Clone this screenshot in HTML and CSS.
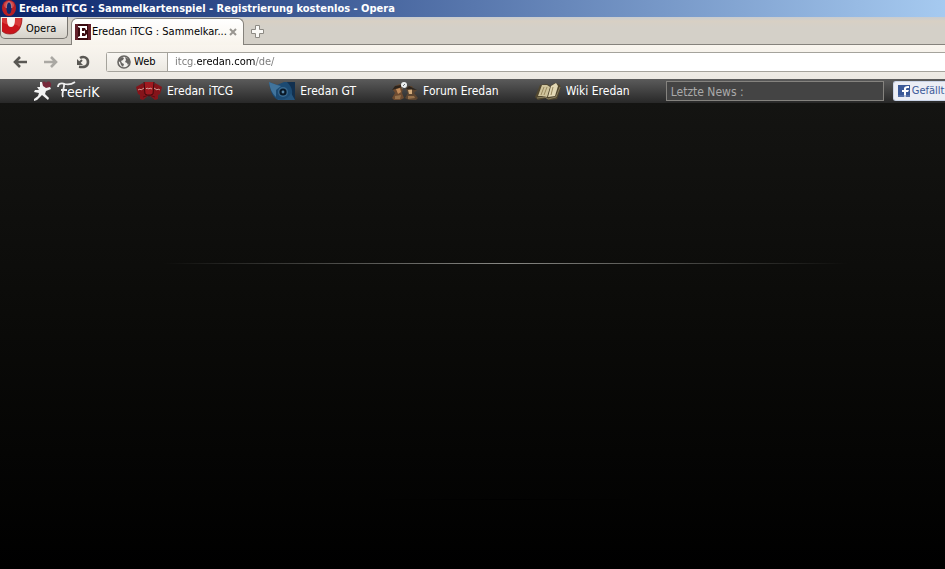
FILE: index.html
```html
<!DOCTYPE html>
<html lang="de">
<head>
<meta charset="utf-8">
<title>Eredan iTCG : Sammelkartenspiel</title>
<link rel="stylesheet" href="styles.css">
</head>
<body>
<header class="titlebar">
  <svg class="title-icon" width="17" height="17" viewBox="0 0 17 17" aria-hidden="true">
    <ellipse cx="8" cy="8" rx="7" ry="8" fill="#b81f25"/>
    <ellipse cx="8" cy="5" rx="5" ry="4" fill="#e06a68" opacity=".6"/>
    <ellipse cx="8" cy="8" rx="2.600" ry="6" fill="#122a6c"/>
    <path d="M5.400 8C5.400 0 10.600 0 10.600 8" fill="none" stroke="#e8a5a0" stroke-width=".6"/>
  </svg>
  <span>Eredan iTCG : Sammelkartenspiel - Registrierung kostenlos - Opera</span>
</header>

<div class="tabbar">
  <button class="menu-button" type="button">
    <svg width="22" height="17" viewBox="0 0 22 17" aria-hidden="true">
      <path d="M0 0H20C20 9 16 16 8 16C4 16 2 15 0 13Z" fill="#c9141b"/>
      <path d="M0 0H20C20 4 19 7 17 9C14 4 6 9 0 4Z" fill="#e2504c" opacity=".6"/>
      <path d="M5 0H13C13 6 12 9 9 9C6 9 5 6 5 0Z" fill="#f7f5f1"/>
      <path d="M20 0C20 9 16 16 8 16C4 16 2 15 0 13" fill="none" stroke="#8f1215" stroke-width=".7"/>
    </svg>
    <span>Opera</span>
  </button>
  <div class="tab">
    <svg width="16" height="16" viewBox="0 0 16 16" aria-hidden="true">
      <rect width="16" height="16" fill="#3a0b10"/>
      <path d="M0 0H3V16H0ZM13 0H16V16H13Z" fill="#63202a"/>
      <path d="M3 2H12V6H11L10 4H7V7H9L10 6V10L9 9H7V12H10L12 10V14H3V13L5 12V4L3 3Z" fill="#fff"/>
    </svg>
    <span class="tab-title">Eredan iTCG : Sammelkar...</span>
    <button class="tab-close" type="button" aria-label="Tab schließen">
      <svg width="8" height="8" viewBox="0 0 8 8"><path d="M1 1L7 7M7 1L1 7" stroke="#999691" stroke-width="2"/></svg>
    </button>
  </div>
  <button class="new-tab" type="button" aria-label="Neuer Tab">
    <svg width="13" height="13" viewBox="0 0 13 13"><path d="M4.500 .5H8.500V4.500H12.500V8.500H8.500V12.500H4.500V8.500H.5V4.500H4.500Z" fill="#faf9f6" stroke="#8d8a84"/></svg>
  </button>
</div>

<div class="toolbar">
  <button class="tool" type="button" aria-label="Zurück">
    <svg width="14" height="14" viewBox="0 0 14 14"><path d="M7 2L2 7L7 12M2 7H14" fill="none" stroke="#595753" stroke-width="2.600"/></svg>
  </button>
  <button class="tool" type="button" aria-label="Vorwärts">
    <svg width="14" height="14" viewBox="0 0 14 14"><path d="M7 2L12 7L7 12M12 7H0" fill="none" stroke="#aaa8a3" stroke-width="2.600"/></svg>
  </button>
  <button class="tool" type="button" aria-label="Neu laden">
    <svg width="16" height="14" viewBox="0 0 16 14"><path d="M5 3C8 1 13 2 13 7C13 12 9 12.500 4 11.800" fill="none" stroke="#5a5854" stroke-width="2.600"/><path d="M2 4V10H8Z" fill="#5a5854"/><path d="M3 9L7 5" stroke="#5a5854" stroke-width="2"/></svg>
  </button>
  <div class="address">
    <button class="badge" type="button">
      <svg width="14" height="14" viewBox="0 0 14 14" aria-hidden="true">
        <circle cx="7" cy="7" r="6" fill="#f3f1ed" stroke="#686663" stroke-width="1.600"/>
        <path d="M2 4L5 2L7 3L6 5L4 6L5 8L7 9L6 12L4 10L3 7L1 6ZM8 2L12 4L13 7L11 10L10 8L8 7L9 5Z" fill="#686663"/>
      </svg>
      <span>Web</span>
    </button>
    <input class="url" type="text" aria-label="Adresse" value="itcg.eredan.com/de/">
  </div>
</div>

<nav class="site-nav">
  <a class="brand" href="#" aria-label="FeeriK">
    <svg width="68" height="24" viewBox="0 0 68 24" aria-hidden="true">
      <path d="M10 8C9 3 12 1 14 4C16 1 20 3 19 7C18 9 16 10 13 11Z" fill="#78283a"/>
      <path d="M8 3L10 3L11 7L14 9L18 8L19 10L14 12L13 15L17 19L16 21L10 16L5 21L2 22L2 20L6 17L7 14L2 13L3 11L7 11L5 8L8 8Z" fill="#f2f2f2"/>
      <path d="M26 8C26 4 30 4 33 5C37 6 40 5 43 3M32 5C33 9 29 14 31 18M29 11H35" fill="none" stroke="#eee" stroke-width="1.800"/>
    </svg>
    <span class="brand-name">eeriK</span>
  </a>
  <a class="nav-link" href="#">
    <svg width="26" height="20" viewBox="0 0 26 20" aria-hidden="true">
      <path d="M0 6L7 2L13 14L7 19L4 18V14L2 13Z" fill="#85141a"/>
      <path d="M26 6L19 2L13 14L19 19L22 18V14L24 13Z" fill="#85141a"/>
      <path d="M8 1H18L17 13H9Z" fill="#a01a20"/>
      <path d="M8 1L9 13L13 15L17 13L18 1" fill="none" stroke="#40090d"/>
      <path d="M7 16L13 14L19 16" fill="none" stroke="#5c0d12"/>
      <path d="M10 8L11 7L13 8L14 7L16 8M2 9L4 8L5 9L8 7M18 7L21 9L22 8L24 9" fill="none" stroke="#d09c95"/>
    </svg>
    <span>Eredan iTCG</span>
  </a>
  <a class="nav-link" href="#">
    <svg width="26" height="20" viewBox="0 0 26 20" aria-hidden="true">
      <path d="M0 1L8 4L15 1H26V19H9C4 17 1 10 0 1Z" fill="#1c4a72"/>
      <path d="M0 1L8 4L12 5L7 9L7 16C3 12 1 8 0 1Z" fill="#41749c"/>
      <path d="M18 1H26V19H20C25 13 24 7 18 1Z" fill="#12304f"/>
      <path d="M9 18C14 20 20 17 22 12L26 19H9Z" fill="#24547d"/>
      <circle cx="14" cy="11" r="5" fill="#39698f"/>
      <circle cx="14" cy="11" r="3.600" fill="#091827"/>
      <circle cx="14" cy="11" r="1.400" fill="#5686a8"/>
    </svg>
    <span>Eredan GT</span>
  </a>
  <a class="nav-link" href="#">
    <svg width="26" height="20" viewBox="0 0 26 20" aria-hidden="true">
      <path d="M0 17L3 12L1 9L3 5L8 3L11 7L10 12L12 17L8 19H2Z" fill="#6d4b30"/>
      <path d="M26 17L22 12L25 9H22L20 5L16 5L14 8L16 12L13 17L17 19H24Z" fill="#5c4530"/>
      <path d="M4 8L8 7L9 11L6 13Z" fill="#c28c5b"/>
      <path d="M16 9L20 8L20 13L17 13Z" fill="#d3ac7c"/>
      <path d="M3 15L9 14L8 18L3 18ZM16 15L22 15L23 17L16 18Z" fill="#96714b"/>
      <path d="M0 9L3 5L9 4L10 6ZM14 8L17 5L25 9Z" fill="#2d241c"/>
      <circle cx="12" cy="4" r="3" fill="#eceff0"/>
      <path d="M11 5L13 3M11 6L10 8" stroke="#676d70"/>
    </svg>
    <span>Forum Eredan</span>
  </a>
  <a class="nav-link" href="#">
    <svg width="26" height="20" viewBox="0 0 26 20" aria-hidden="true">
      <path d="M0 16L5 4L12 3L15 5L20 2L25 4L26 7L22 18L14 19L11 17L3 19Z" fill="#51472f"/>
      <path d="M3 15L7 4L12 4L15 6L12 16L7 15Z" fill="#cfc49d"/>
      <path d="M13 16L16 5L21 2L23 5L20 15Z" fill="#e2d8b5"/>
      <path d="M6 14L9 6M9 14L12 6M16 14L18 6" stroke="#99895f"/>
      <path d="M2 17L10 16L13 18L21 16L25 6" fill="none" stroke="#8a8060"/>
    </svg>
    <span>Wiki Eredan</span>
  </a>
  <div class="news-group">
    <input class="news" type="text" aria-label="Letzte News" placeholder="Letzte News :">
    <button class="like" type="button">
      <svg width="12" height="12" viewBox="0 0 12 12" aria-hidden="true">
        <rect width="12" height="12" fill="#3b5998"/>
        <path d="M6 12V7H4V5H6V4C6 2 7 1 11 1V3H9C8 3 8 4 8 5H11L10 7H8V12Z" fill="#fff"/>
        <path d="M0 11H12" stroke="#7085b4"/>
      </svg>
      <span>Gefällt</span>
    </button>
  </div>
</nav>

<main class="page">
  <hr class="divider">
  <hr class="divider faint">
</main>
</body>
</html>
```
FILE: styles.css
```css
* {
  box-sizing: border-box;
}

body {
  margin: 0;
  min-height: 100vh;
  display: flex;
  flex-direction: column;
  overflow: hidden;
  background: #000;
  color: #000;
  font: 11px/16px "DejaVu Sans Condensed", "DejaVu Sans", sans-serif;
}

button,
input {
  margin: 0;
  padding: 0;
  border: 0;
  background: none;
  color: inherit;
  font: inherit;
}

svg {
  display: block;
  flex: none;
}

.titlebar {
  display: flex;
  align-items: center;
  gap: 1px;
  height: 17px;
  padding-left: 1px;
  background: linear-gradient(90deg, #0a246a, #a6caf0);
  color: #fff;
  font-weight: bold;
  white-space: nowrap;
}

.tabbar {
  display: flex;
  align-items: flex-start;
  height: 28px;
  background: linear-gradient(#c8ccd0, #d8d0c4 4px, #d4d0c8 10px);
  box-shadow: inset 0 -1px #85827c;
}

.menu-button {
  display: flex;
  align-items: flex-start;
  gap: 2px;
  width: 68px;
  height: 22px;
  margin-right: 3px;
  padding: 1px;
  border: 1px solid #77746f;
  border-top: 0;
  border-radius: 0 0 5px 5px;
  background: linear-gradient(#f4f2ee, #d6d2ca);
}

.menu-button span {
  padding-top: 3px;
}

.tab {
  display: flex;
  align-items: center;
  gap: 1px;
  width: 173px;
  height: 27px;
  margin-top: 1px;
  padding: 0 6px 0 3px;
  border: 1px solid #85827c;
  border-bottom: 0;
  border-radius: 6px 6px 0 0;
  background: linear-gradient(#fff, #f8f4ec);
}

.tab-title {
  flex: 1;
  white-space: nowrap;
}

.new-tab {
  padding: 8px 7px;
}

.toolbar {
  display: flex;
  align-items: center;
  height: 34px;
  padding-left: 13px;
  background: linear-gradient(#f9f5ee, #ece9e3);
}

.tool {
  width: 31px;
  height: 24px;
}

.address {
  display: flex;
  flex: 1;
  height: 20px;
  border: 1px solid #a5a39c;
  border-right: 0;
  border-radius: 3px 0 0 3px;
  background: #fff;
}

.badge {
  display: flex;
  align-items: center;
  gap: 3px;
  width: 61px;
  padding-left: 10px;
  border-right: 1px solid #a5a39c;
  background: linear-gradient(#f9f7f3, #ebe8e1);
}

/* The host name is darker than the rest of the address. */
.url {
  flex: 1;
  min-width: 0;
  padding-left: 7px;
  background: linear-gradient(90deg, #777 28px, #000 28px, #000 87px, #777 87px);
  background-clip: text;
  color: transparent;
}

.site-nav {
  display: flex;
  align-items: center;
  gap: 36px;
  height: 24px;
  padding-left: 32px;
  background: linear-gradient(#5b5b5b, #282828);
  color: #fff;
  font-size: 12px;
  white-space: nowrap;
}

.brand {
  display: grid;
  align-items: center;
  color: #fff;
  text-decoration: none;
}

.brand svg,
.brand-name {
  grid-area: 1 / 1;
}

.brand-name {
  width: 33px;
  padding: 2px 0 0 35px;
  font-size: 14px;
}

.nav-link {
  display: flex;
  align-items: center;
  gap: 5px;
  color: #fff;
  text-decoration: none;
}

.news-group {
  display: flex;
  flex: 1;
  gap: 9px;
  min-width: 0;
}

.news {
  flex: none;
  width: 218px;
  height: 20px;
  padding: 2px 4px 0;
  border: 1px solid #85837f;
  background: #444;
}

.news::placeholder {
  color: #aaa;
}

.like {
  display: flex;
  flex: 1;
  align-items: center;
  gap: 2px;
  height: 20px;
  padding-left: 4px;
  border: 1px solid #cad4e7;
  border-right: 0;
  border-radius: 3px 0 0 3px;
  background: #eceef5;
  color: #3b5998;
  font-size: 11px;
}

.page {
  display: flex;
  flex: 1;
  flex-direction: column;
  align-items: center;
  gap: 235px;
  padding: 160px 0 0 66px;
  background: linear-gradient(#141412, #0a0a08 50%, #000);
}

.divider {
  width: 78%;
  height: 1px;
  margin: 0;
  border: 0;
  background: linear-gradient(90deg, transparent, #888884, transparent);
}

.faint {
  width: 34%;
  background: linear-gradient(90deg, transparent, #000, transparent);
}
```
